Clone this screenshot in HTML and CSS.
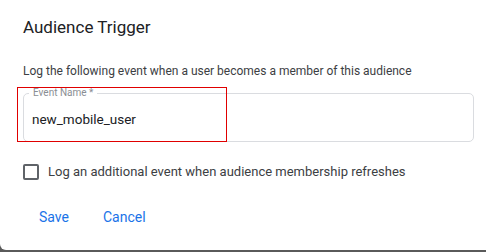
FILE: index.html
```html
<!DOCTYPE html>
<html lang="en">
<head>
    <meta charset="UTF-8">
    <meta name="viewport" content="width=device-width, initial-scale=1.0">
    <title>Audience Trigger</title>
    <link rel="stylesheet" href="styles.css">
</head>
<body>

<div class="dialog">
    <h2 class="title">Audience Trigger</h2>
    <p class="desc">Log the following event when a user becomes a member of this audience</p>

    <div class="field">
        <span class="field-label">Event Name *</span>
        <div class="field-value">new_mobile_user</div>
        <div class="highlight"></div>
    </div>

    <label class="check-row">
        <span class="checkbox"></span>
        <span>Log an additional event when audience membership refreshes</span>
    </label>

    <div class="actions">
        <button class="btn">Save</button>
        <button class="btn">Cancel</button>
    </div>
</div>

</body>
</html>
```
FILE: styles.css
```css
/* Dialog over a dimmed page */
body {
    margin: 0;
    height: 252px;
    background-color: #5a5a5a;
    font-family: Roboto, "Liberation Sans", sans-serif;
    overflow: hidden;
}
.dialog {
    height: 250px;
    box-sizing: border-box;
    background-color: #fff;
    border-radius: 0 0 0 6px;
    padding: 15px 12px 0 23px;
}
.title {
    margin: 0;
    font-size: 17px;
    font-weight: 400;
    line-height: 24px;
    color: #202124;
}
.desc {
    margin: 24px 0 0;
    font-size: 12px;
    line-height: 16px;
    color: #3c4043;
}
.field {
    position: relative;
    margin-top: 14px;
    height: 47px;
    border: 1px solid #dadce0;
    border-radius: 5px;
}
.field-label {
    position: absolute;
    top: -7px;
    left: 5px;
    padding: 0 4px;
    background-color: #fff;
    font-size: 10px;
    line-height: 12px;
    color: #8a8e93;
}
.field-value {
    padding: 16px 0 0 8px;
    font-size: 13.5px;
    line-height: 18px;
    color: #202124;
}
/* red annotation box drawn over the field */
.highlight {
    position: absolute;
    top: -7px;
    left: -7px;
    width: 208px;
    height: 53px;
    border: 1px solid #e00000;
}
.check-row {
    display: flex;
    align-items: center;
    gap: 9px;
    margin-top: 21px;
    font-size: 13px;
    line-height: 18px;
    color: #3c4043;
}
.checkbox {
    width: 12px;
    height: 12px;
    border: 2px solid #5f6368;
    border-radius: 2px;
}
.actions {
    display: flex;
    gap: 34px;
    margin-top: 27px;
    padding-left: 16px;
}
.btn {
    border: none;
    background: none;
    padding: 0;
    font-family: Roboto, "Liberation Sans", sans-serif;
    font-size: 14px;
    line-height: 18px;
    color: #1a73e8;
    cursor: pointer;
}
```
